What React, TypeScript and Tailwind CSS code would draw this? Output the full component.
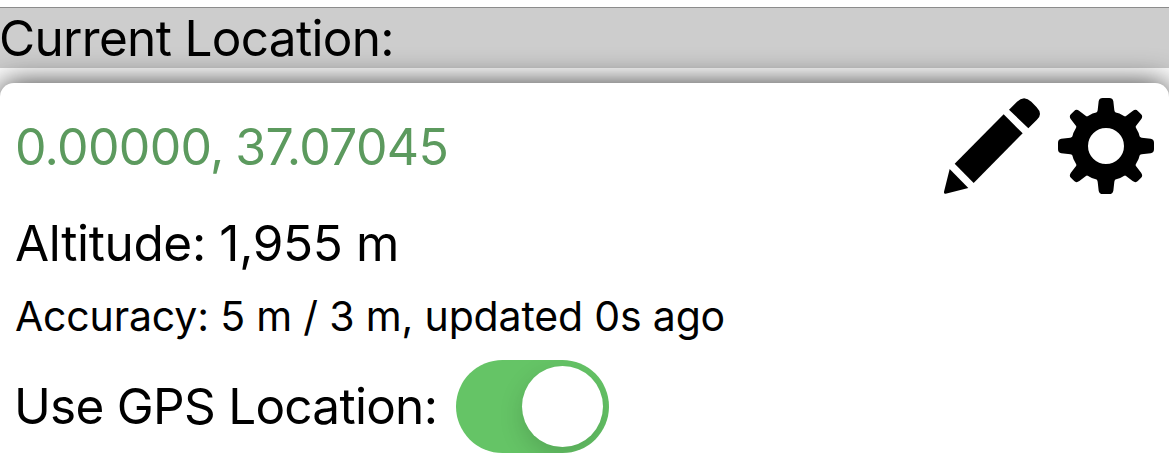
import React, { useState } from "react";

type rowProps = {
    children: React.ReactNode;
    className?: string;
};

const Row = ({ children, className = "" }: rowProps) => (
    <div className={`flex items-center whitespace-nowrap ${className}`}>{children}</div>
);

const PencilIcon = () => (
    <svg viewBox="0 0 288 288" className="size-24" fill="currentColor" aria-hidden="true">
        <path d="M195 35L219 11Q240-10 262 11L278 28Q298 49 278 66L253 91Z" />
        <path d="M179 49L236 106L89 255L32 197Z" />
        <path d="M17 213L73 270L5 287Q-1 288 0 281Z" />
    </svg>
);

const TOOTH = "M112 48Q118 44 119 37L122 10Q124 0 134 0H154Q164 0 166 10L169 37Q170 44 176 48Z";
const DIAGONAL_TOOTH = "M114 50Q122 45 123 38L126 13Q128 2 137 2H151Q160 2 162 13L165 38Q166 45 174 50Z";

const GearIcon = () => (
    <svg viewBox="0 0 288 288" className="size-24" fill="currentColor" aria-hidden="true">
        {[0, 90, 180, 270].map((angle) => (
            <g key={angle} transform={`rotate(${angle} 144 144)`}>
                <path d={TOOTH} />
                <path d={DIAGONAL_TOOTH} transform="rotate(45 144 144)" />
            </g>
        ))}
        <circle cx="144" cy="144" r="79.5" fill="none" stroke="currentColor" strokeWidth="51" />
    </svg>
);

type switchProps = {
    checked: boolean;
    onChange: (checked: boolean) => void;
};

const Switch = ({ checked, onChange }: switchProps) => (
    <button
        type="button"
        role="switch"
        aria-checked={checked}
        aria-label="Use GPS Location"
        onClick={() => onChange(!checked)}
        className={`flex h-[93px] w-[153px] items-center overflow-hidden rounded-full px-1.5 ${checked ? "justify-end bg-[#65c466]" : "justify-start bg-gray-200"}`}
    >
        <span className="size-[81px] rounded-full bg-white shadow-[0_9px_24px_rgba(0,0,0,0.15)]" />
    </button>
);

export default function App() {
    const [useGps, setUseGps] = useState(true);

    return (
        <div className="h-[470px] overflow-hidden bg-white pt-[7px] font-['Inter','Liberation_Sans',sans-serif] text-black">
            <header className="h-[61px] border-t border-[#8c8c8c] bg-[#cdcdcd]">
                <h1 className="-ml-px text-[49.5px] leading-[60px] tracking-[-0.68px] whitespace-nowrap">Current Location:</h1>
            </header>
            <section className="relative mt-[15px] h-[420px] rounded-[14px] bg-white px-[15px] pt-[15px] shadow-[0_0_30px_rgba(0,0,0,0.8)]">
                <Row className="h-24 justify-between">
                    <span className="pt-0.5 text-[50px] tracking-[-0.68px] [word-spacing:-2px] text-[#5c9a5e]">0.00000, 37.07045</span>
                    <div className="flex gap-[18px]">
                        <PencilIcon />
                        <GearIcon />
                    </div>
                </Row>
                <Row className="h-24 pt-0.5 text-[49.5px] tracking-[-0.35px]">Altitude: 1,955 m</Row>
                <Row className="h-[52px] pt-0.5 text-[41px] tracking-[-0.17px]">Accuracy: 5 m / 3 m, updated 0s ago</Row>
                <Row className="mt-[18px] text-[49.5px] tracking-[-0.73px]">
                    <span className="-ml-px w-[442px]">Use GPS Location:</span>
                    <Switch checked={useGps} onChange={setUseGps} />
                </Row>
            </section>
        </div>
    );
}
